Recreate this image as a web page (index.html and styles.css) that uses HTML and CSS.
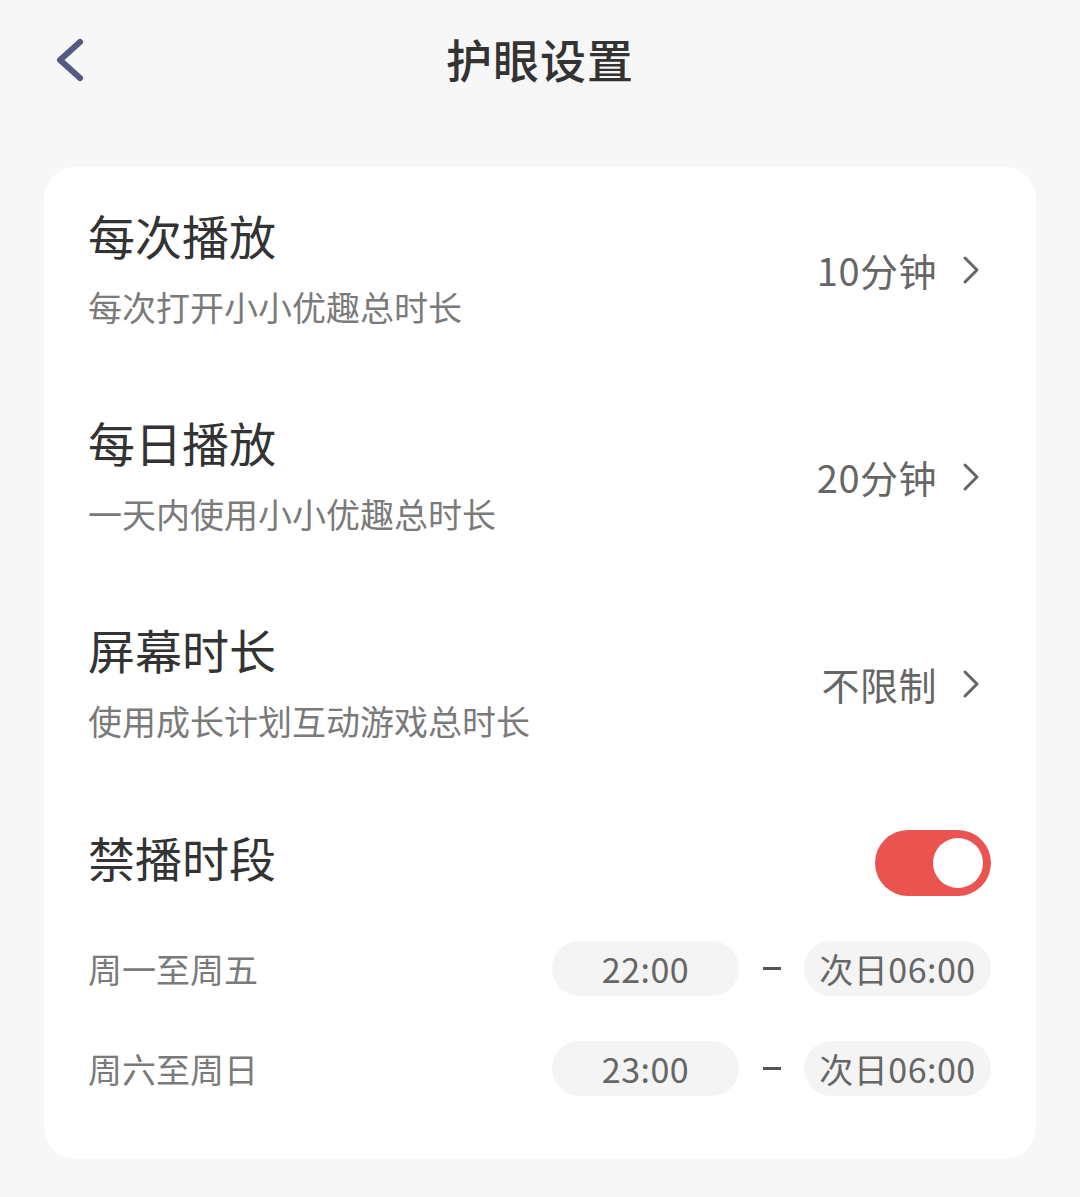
FILE: index.html
```html
<!DOCTYPE html>
<html lang="zh-CN">
<head>
<meta charset="utf-8">
<title>护眼设置</title>
<link rel="stylesheet" href="styles.css">
</head>
<body>
<header class="topbar">
  <a class="back" href="#" aria-label="返回">
    <svg width="40" height="48" viewBox="0 0 40 48"><path d="M28 6 L8 24 L28 42" fill="none" stroke="#555a82" stroke-width="6" stroke-linecap="round" stroke-linejoin="round"/></svg>
  </a>
  <h1 class="title">护眼设置</h1>
</header>
<main class="card">
  <div class="row">
    <div class="texts">
      <div class="name">每次播放</div>
      <div class="desc">每次打开小小优趣总时长</div>
    </div>
    <div class="value">10分钟<svg class="chev" width="20" height="30" viewBox="0 0 20 30"><path d="M4 3 L16 15 L4 27" fill="none" stroke="#666" stroke-width="3" stroke-linecap="round" stroke-linejoin="round"/></svg></div>
  </div>
  <div class="row">
    <div class="texts">
      <div class="name">每日播放</div>
      <div class="desc">一天内使用小小优趣总时长</div>
    </div>
    <div class="value">20分钟<svg class="chev" width="20" height="30" viewBox="0 0 20 30"><path d="M4 3 L16 15 L4 27" fill="none" stroke="#666" stroke-width="3" stroke-linecap="round" stroke-linejoin="round"/></svg></div>
  </div>
  <div class="row">
    <div class="texts">
      <div class="name">屏幕时长</div>
      <div class="desc">使用成长计划互动游戏总时长</div>
    </div>
    <div class="value">不限制<svg class="chev" width="20" height="30" viewBox="0 0 20 30"><path d="M4 3 L16 15 L4 27" fill="none" stroke="#666" stroke-width="3" stroke-linecap="round" stroke-linejoin="round"/></svg></div>
  </div>
  <div class="ban">
    <div class="ban-head">
      <div class="name">禁播时段</div>
      <div class="toggle"><span class="knob"></span></div>
    </div>
    <div class="slot">
      <div class="slot-label">周一至周五</div>
      <div class="slot-times">
        <span class="pill">22:00</span>
        <span class="dash"></span>
        <span class="pill">次日06:00</span>
      </div>
    </div>
    <div class="slot">
      <div class="slot-label">周六至周日</div>
      <div class="slot-times">
        <span class="pill">23:00</span>
        <span class="dash"></span>
        <span class="pill">次日06:00</span>
      </div>
    </div>
  </div>
</main>
</body>
</html>
```
FILE: styles.css
```css
html, body {
  margin: 0;
  padding: 0;
}
body {
  background: #f7f7f7;
  font-family: "Noto Sans CJK SC", "Noto Sans", sans-serif;
  width: 1080px;
  height: 1197px;
  overflow: hidden;
}
.topbar {
  height: 124px;
  box-sizing: border-box;
  padding-bottom: 8px;
  display: flex;
  align-items: center;
  justify-content: center;
  position: relative;
}
.back {
  position: absolute;
  left: 52px;
  top: 36px;
  display: block;
  width: 40px;
  height: 48px;
}
.back svg { display: block; }
.title {
  margin: 0;
  font-size: 46px;
  font-weight: 500;
  color: #333;
  line-height: 56px;
  letter-spacing: 1px;
}
.card {
  margin: 43px 44px 0;
  background: #fff;
  border-radius: 32px;
  padding: 2px 45px 63px 44px;
  display: block;
}
.row {
  height: 207px;
  box-sizing: border-box;
  padding: 39px 0 48px;
  display: flex;
  align-items: center;
  justify-content: space-between;
}
.texts {
  display: flex;
  flex-direction: column;
  gap: 22px;
}
.name {
  font-size: 47px;
  line-height: 56px;
  color: #333;
}
.desc {
  font-size: 34px;
  line-height: 44px;
  color: #7a7a7a;
}
.value {
  display: flex;
  align-items: center;
  gap: 24px;
  font-size: 38px;
  line-height: 48px;
  color: #666;
  padding-right: 10px;
  margin-top: 4px;
  letter-spacing: 0.5px;
}
.chev { display: block; }
.ban {
  padding-top: 39px;
}
.ban-head {
  display: flex;
  align-items: center;
  justify-content: space-between;
  height: 56px;
  margin-bottom: 56px;
}
.toggle {
  width: 116px;
  height: 66px;
  border-radius: 33px;
  background: #eb5350;
  display: flex;
  align-items: center;
  justify-content: flex-end;
  padding-right: 8px;
  box-sizing: border-box;
  margin-top: 12px;
}
.knob {
  width: 50px;
  height: 50px;
  border-radius: 50%;
  background: #fff;
}
.slot {
  display: flex;
  align-items: center;
  justify-content: space-between;
  height: 55px;
}
.slot + .slot {
  margin-top: 45px;
}
.slot-label {
  font-size: 34px;
  color: #7a7a7a;
  line-height: 44px;
}
.slot-times {
  display: flex;
  align-items: center;
}
.pill {
  width: 187px;
  height: 55px;
  border-radius: 28px;
  background: #f4f4f4;
  display: flex;
  align-items: center;
  justify-content: center;
  font-size: 34px;
  color: #666;
  letter-spacing: 0.5px;
}
.dash {
  width: 18px;
  height: 3px;
  background: #555;
  margin: 0 23px 0 24px;
}
```
